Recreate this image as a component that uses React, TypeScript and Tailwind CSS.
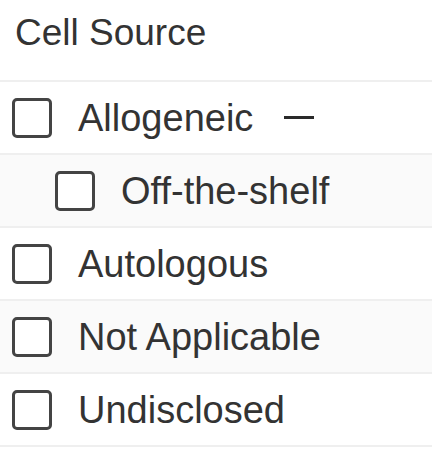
import type { ReactNode } from "react";

type Option = {
  label: string;
  indent?: boolean;
  shaded?: boolean;
  collapsible?: boolean;
};

const options: Option[] = [
  { label: "Allogeneic", collapsible: true },
  { label: "Off-the-shelf", indent: true, shaded: true },
  { label: "Autologous" },
  { label: "Not Applicable", shaded: true },
  { label: "Undisclosed" },
];

export default function App() {
  return (
    <div className="h-[456px] w-[432px] bg-white font-['Liberation_Sans',Arial,sans-serif] text-[#333]">
      <div className="flex h-[82px] items-start border-b-2 border-[#efefef] px-[15px] pt-[11px]">
        <h2 className="text-[37px] leading-[44px]">Cell Source</h2>
      </div>
      {options.map((option) => (
        <FilterRow key={option.label} option={option}>
          {option.label}
        </FilterRow>
      ))}
    </div>
  );
}

function FilterRow({ option, children }: { option: Option; children: ReactNode }) {
  return (
    <label
      className={`flex h-[73px] items-center border-b-2 border-[#efefef] ${option.shaded ? "bg-[#fafafa]" : "bg-white"} ${
        option.indent ? "pl-[55px]" : "pl-[12px]"
      }`}
    >
      <span className="h-[40px] w-[40px] shrink-0 rounded-[5px] border-[3px] border-[#444] bg-white" />
      <span className="ml-[26px] text-[38px] leading-none">{children}</span>
      {option.collapsible ? <span className="ml-[31px] h-[3px] w-[30px] bg-[#2a2a2a]" /> : null}
    </label>
  );
}
